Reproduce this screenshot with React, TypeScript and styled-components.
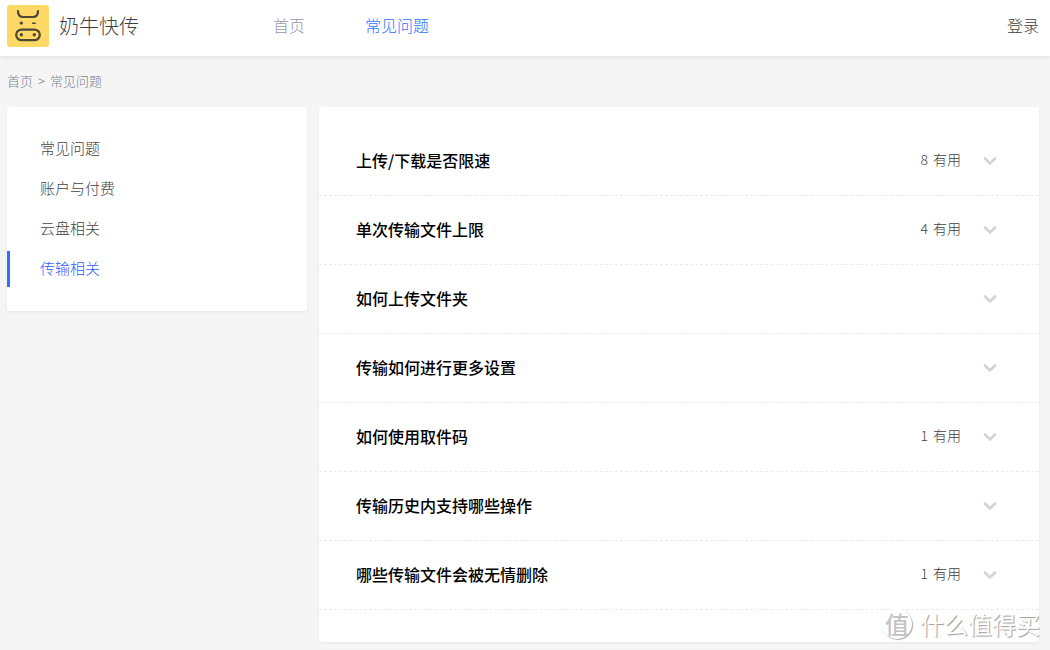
import React, { useState } from 'react';
import styled, { createGlobalStyle } from 'styled-components';

const GlobalStyle = createGlobalStyle`
  *, *::before, *::after { box-sizing: border-box; }
  body {
    margin: 0;
    background: #f5f5f5;
    color: #3f3f3f;
    font-family: "Noto Sans CJK SC", sans-serif;
    font-weight: 300;
  }
  a { color: inherit; text-decoration: none; }
  ul { list-style: none; margin: 0; padding: 0; }
`;

const Page = styled.div`
  position: relative;
  min-height: 100vh;
  padding-bottom: 8px;
`;

const Header = styled.header`
  display: flex;
  align-items: center;
  height: 56px;
  padding: 0 11px 4px 7px;
  background: #fff;
  box-shadow: 0 1px 4px rgba(0, 0, 0, 0.1);
`;

const Brand = styled.a`
  display: flex;
  align-items: center;
  gap: 10px;
  font-size: 20px;
  line-height: 28px;
`;

const Nav = styled.nav`
  display: flex;
  flex: 1;
  gap: 60px;
  margin-left: 134px;
`;

const HeaderLink = styled.a<{ $tone: string }>`
  padding-bottom: 2px;
  color: ${({ $tone }) => $tone};
  font-size: 16px;
  line-height: 24px;
`;

const Breadcrumb = styled.nav`
  display: flex;
  gap: 5px;
  padding: 15px 7px 16px;
  color: #75828e;
  font-size: 13px;
  line-height: 20px;
`;

const Content = styled.div`
  display: flex;
  align-items: flex-start;
  gap: 12px;
  padding: 0 11px 0 7px;
`;

const Panel = styled.section`
  background: #fff;
  border-radius: 3px;
  box-shadow: 0 1px 3px rgba(0, 0, 0, 0.06);
`;

const Sidebar = styled(Panel).attrs({ as: 'aside' })`
  flex: 0 0 300px;
  padding: 24px 0;
`;

const Categories = styled.ul`
  display: grid;
  gap: 4px;
`;

const CategoryLink = styled.a<{ $active: boolean }>`
  display: block;
  padding: 0 0 2px 30px;
  border-left: 3px solid ${({ $active }) => ($active ? '#2f70ff' : 'transparent')};
  color: ${({ $active }) => ($active ? '#2f5cff' : '#444')};
  font-size: 15px;
  line-height: 34px;
`;

const Questions = styled(Panel)`
  flex: 1;
  min-width: 0;
  padding: 20px 0 32px;
`;

const QuestionButton = styled.button`
  display: flex;
  align-items: center;
  width: 100%;
  height: 69px;
  padding: 0 42px 0 37px;
  border: 0;
  border-bottom: 1px dashed #ebebed;
  background: none;
  color: #3f3f3f;
  font: inherit;
  text-align: left;
  cursor: pointer;
`;

const QuestionTitle = styled.span`
  flex: 1;
  padding-bottom: 2px;
  color: #000;
  font-size: 16px;
  font-weight: 500;
  line-height: 24px;
`;

const Useful = styled.span`
  display: flex;
  gap: 5px;
  margin-right: 22px;
  padding-bottom: 4px;
  font-size: 14px;
  line-height: 20px;
`;

const Chevron = styled.svg`
  display: block;
  width: 14px;
  height: 10px;
`;

const Watermark = styled.div`
  position: absolute;
  right: 10px;
  bottom: 9px;
  display: flex;
  align-items: center;
  gap: 8px;
  color: #fff;
  font-size: 24px;
  font-weight: 400;
  line-height: 34px;
  text-shadow: 1px 1px 1px #999;
  white-space: nowrap;
  pointer-events: none;
`;

const Seal = styled.span`
  display: grid;
  place-items: center;
  width: 30px;
  height: 30px;
  border-radius: 50%;
  background: #fff;
  box-shadow: 1px 1px 1px #aaa;
  color: #c4c4c4;
  font-size: 24px;
  font-weight: 500;
  line-height: 28px;
  text-shadow: none;
`;

const categories = ['常见问题', '账户与付费', '云盘相关', '传输相关'];

const questions: { title: string; useful?: number }[] = [
  { title: '上传/下载是否限速', useful: 8 },
  { title: '单次传输文件上限', useful: 4 },
  { title: '如何上传文件夹' },
  { title: '传输如何进行更多设置' },
  { title: '如何使用取件码', useful: 1 },
  { title: '传输历史内支持哪些操作' },
  { title: '哪些传输文件会被无情删除', useful: 1 },
];

function CowLogo() {
  return (
    <svg width="42" height="42" viewBox="0 0 42 42" aria-hidden="true">
      <rect width="42" height="42" rx="3" fill="#ffd966" />
      <g fill="none" stroke="#4d4735" strokeWidth="2.2" strokeLinecap="round">
        <path d="M11 6C11 9.8 12.8 12 16 12H26C29.2 12 31 9.8 31 6" />
        <rect x="9.2" y="24.6" width="23.6" height="10.6" rx="5.3" />
        <path d="M25.6 18.2H28.2" strokeWidth="1.5" />
      </g>
      <g fill="#4d4735">
        <circle cx="14.3" cy="18.1" r="1.7" />
        <circle cx="14.3" cy="29.8" r="1.7" />
        <circle cx="27.3" cy="29.8" r="1.7" />
      </g>
    </svg>
  );
}

export default function App() {
  const [active, setActive] = useState('传输相关');

  return (
    <Page>
      <GlobalStyle />
      <Header>
        <Brand href="#">
          <CowLogo />
          奶牛快传
        </Brand>
        <Nav>
          <HeaderLink href="#" $tone="#959ba8">首页</HeaderLink>
          <HeaderLink href="#" $tone="#2f70ff">常见问题</HeaderLink>
        </Nav>
        <HeaderLink href="#" $tone="#3f3f3f">登录</HeaderLink>
      </Header>
      <Breadcrumb>
        <a href="#">首页</a>
        <span>&gt;</span>
        <a href="#">常见问题</a>
      </Breadcrumb>
      <Content>
        <Sidebar>
          <Categories>
            {categories.map((name) => (
              <li key={name}>
                <CategoryLink href="#" $active={name === active} onClick={() => setActive(name)}>
                  {name}
                </CategoryLink>
              </li>
            ))}
          </Categories>
        </Sidebar>
        <Questions>
          <ul>
            {questions.map(({ title, useful }) => (
              <li key={title}>
                <QuestionButton type="button">
                  <QuestionTitle>{title}</QuestionTitle>
                  {useful !== undefined && (
                    <Useful>
                      <span>{useful}</span>
                      <span>有用</span>
                    </Useful>
                  )}
                  <Chevron viewBox="0 0 14 10" aria-hidden="true">
                    <path
                      d="M2 2.5L7 7.5L12 2.5"
                      fill="none"
                      stroke="#d2d2da"
                      strokeWidth="2.6"
                      strokeLinecap="round"
                    />
                  </Chevron>
                </QuestionButton>
              </li>
            ))}
          </ul>
        </Questions>
      </Content>
      <Watermark>
        <Seal>值</Seal>
        <span>什么值得买</span>
      </Watermark>
    </Page>
  );
}
